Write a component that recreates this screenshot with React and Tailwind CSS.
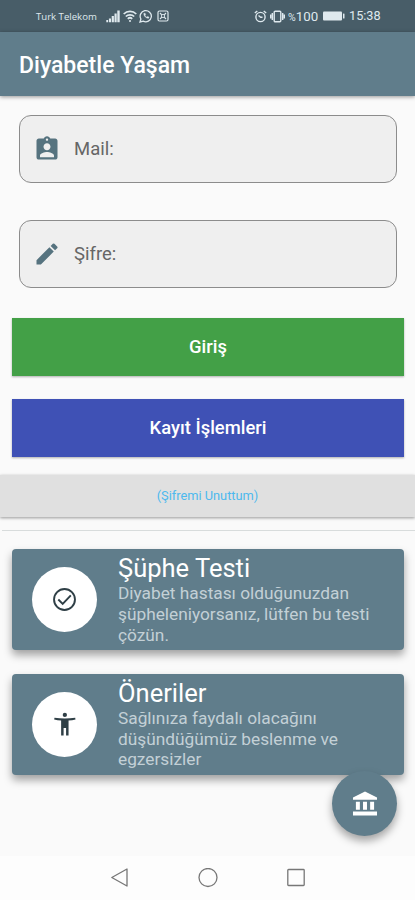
import React from 'react';
import { MdAssignmentInd, MdCreate } from 'react-icons/md';

const fields = [
  { id: 'mail', label: 'Mail:', icon: MdAssignmentInd },
  { id: 'sifre', label: 'Şifre:', icon: MdCreate },
];

const cards = [
  {
    title: 'Şüphe Testi',
    lines: ['Diyabet hastası olduğunuzdan', 'şüpheleniyorsanız, lütfen bu testi', 'çözün.'],
    icon: CheckIcon,
  },
  {
    title: 'Öneriler',
    lines: ['Sağlınıza faydalı olacağını', 'düşündüğümüz beslenme ve', 'egzersizler'],
    icon: PersonIcon,
  },
];

function CheckIcon({ className }) {
  return (
    <svg className={className} viewBox="0 0 24 24" fill="none" stroke="currentColor" strokeWidth="1.7">
      <circle cx="12" cy="12" r="9.300" />
      <path d="M6.500 12l3.900 3.900 7.200-7.600" />
    </svg>
  );
}

function PersonIcon({ className }) {
  return (
    <svg className={className} viewBox="0 0 24 24" fill="currentColor">
      <circle cx="12.300" cy="3.500" r="1.900" />
      <path d="M3.100 6c3 .5 6 .6 9.200.6s6.200-.1 9.200-.6l.3 1.500c-2.100.6-4 .8-6.200 1v13.200h-2.200v-6.500h-2.200v6.500H9V8.500c-2.200-.2-4.100-.4-6.200-1z" />
    </svg>
  );
}

function BankIcon({ className }) {
  return (
    <svg className={className} viewBox="0 0 24 24" fill="currentColor">
      <path d="M12 1.200L22.300 6.400V8.400H1.700V6.400z" />
      <path d="M4.200 10h3.400v7H4.200zM10.300 10h3.400v7h-3.400zM16.400 10h3.400v7h-3.400zM1.700 18.500h20.600v3.400H1.700z" />
    </svg>
  );
}

function StatusBar() {
  return (
    <div className="flex h-8 items-center bg-[#485d68] pl-[36px] pr-[33px] text-[#dfe9ee]">
      <span className="w-[70px] whitespace-nowrap pt-px font-['Open_Sans'] text-[9.6px] leading-none">Turk Telekom</span>
      {/* signal */}
      <svg className="h-[14px] w-[14px]" viewBox="0 0 14 14" fill="currentColor">
        <path d="M0.300 11h1.800v2.200H0.300zM2.900 9.500h2.100v3.700H2.900zM5.700 7h2.200v6.200H5.700zM8.500 4.500h2.200v8.700H8.500zM11.300 1.500h2.400v11.700h-2.400z" />
      </svg>
      {/* wifi */}
      <svg className="ml-[3px] h-[14px] w-[14px]" viewBox="0 0 14 14" fill="none" stroke="currentColor" strokeWidth="1.700">
        <path d="M0.700 5a9 9 0 0 1 12.600 0M2.800 7.500a6 6 0 0 1 8.400 0M4.800 9.800a3.200 3.200 0 0 1 4.400 0" />
        <circle cx="7" cy="12" r="1" fill="currentColor" stroke="none" />
      </svg>
      {/* whatsapp */}
      <svg className="ml-[2px] h-[14px] w-[14px]" viewBox="0 0 14 14" fill="none" stroke="currentColor" strokeWidth="1.300">
        <path d="M1 13l.9-3A5.600 5.600 0 1 1 4.200 12.200z" />
        <path d="M4.800 4.300c-.4 2.600 2.200 5.200 4.900 5l.3-1.200-1.500-.7-.8.7c-.8-.4-1.300-1-1.600-1.700l.6-.8-.6-1.400z" fill="currentColor" strokeWidth="0.300" />
      </svg>
      {/* boxed notification */}
      <svg className="ml-[4px] h-[12px] w-[12px]" viewBox="0 0 12 12" fill="none" stroke="currentColor" strokeWidth="1.200">
        <rect x="1" y="1" width="10" height="10" rx="1.500" />
        <path d="M3 3l1.800 1.800M9 3L7.200 4.800M3 9l1.800-1.800M9 9L7.200 7.200" />
        <circle cx="6" cy="6" r="1.600" strokeWidth="0.900" />
      </svg>

      <div className="ml-auto flex items-center">
        {/* alarm */}
        <svg className="h-[13px] w-[13px]" viewBox="0 0 13 13" fill="none" stroke="currentColor" strokeWidth="1.400">
          <circle cx="6.500" cy="7" r="4.600" />
          <path d="M0.800 3L3.300 1M12.200 3L9.700 1M4.500 5.500l2.200 1.800h1.800" />
        </svg>
        {/* vibrate */}
        <svg className="ml-[3px] h-[13px] w-[15px]" viewBox="0 0 15 13" fill="none" stroke="currentColor" strokeWidth="1.400">
          <rect x="4.200" y="1.200" width="6.600" height="10.600" rx="1" />
          <path d="M2.300 3v7M0.700 4.500v4M12.700 3v7M14.300 4.500v4" />
        </svg>
        <span className="ml-[3px] w-[35px] whitespace-nowrap pt-px font-[Roboto] text-[13.300px] leading-none">
          <span className="text-[10.500px]">%</span>100
        </span>
        {/* battery */}
        <svg className="h-[10px] w-[22px]" viewBox="0 0 22 10" fill="currentColor">
          <rect x="0" y="0.500" width="19" height="9" rx="1" />
          <rect x="20" y="2.500" width="1.500" height="5" rx="0.500" />
        </svg>
        <span className="ml-[4px] w-[33px] whitespace-nowrap pt-px font-[Roboto] text-[12.700px] leading-none">15:38</span>
      </div>
    </div>
  );
}

function Field({ id, label, icon: Icon }) {
  return (
    <label
      htmlFor={id}
      className="flex h-[68px] items-center rounded-[12px] border border-[#8c8c8c] bg-[#efefef] pl-[13px]"
    >
      <Icon className="h-[28px] w-[28px] text-[#56737f]" />
      <span className="ml-[13px] pt-[2px] text-[18.500px] text-[#666666]">{label}</span>
      <input id={id} className="min-w-0 flex-1 outline-none" />
    </label>
  );
}

function InfoCard({ title, lines, icon: Icon }) {
  return (
    <div className="flex h-[101px] items-center rounded-[4px] bg-[#607d8b] pl-5 shadow-[0_5px_8px_rgba(0,0,0,0.36)]">
      <div className="flex h-[65px] w-[65px] shrink-0 items-center justify-center rounded-full bg-white">
        <Icon className="h-[27px] w-[27px] text-[#2f3f46]" />
      </div>
      <div className="ml-[21px] whitespace-nowrap">
        <h2 className="text-[25.500px] leading-[30px] text-white">{title}</h2>
        {lines.map((line) => (
          <p key={line} className="text-[17.300px] leading-[20.700px] text-[#c3d0d6]">
            {line}
          </p>
        ))}
      </div>
    </div>
  );
}

function NavBar() {
  return (
    <div className="flex h-[44px] items-center justify-center gap-[68px] bg-[#fdfdfd] text-[#777777]">
      <svg className="h-5 w-5" viewBox="0 0 20 20" fill="none" stroke="currentColor" strokeWidth="1.300">
        <path d="M17 1v17L1.800 9.500z" strokeLinejoin="round" />
      </svg>
      <svg className="h-5 w-5" viewBox="0 0 20 20" fill="none" stroke="currentColor" strokeWidth="1.300">
        <circle cx="10" cy="9.500" r="9" />
      </svg>
      <svg className="h-5 w-5" viewBox="0 0 20 20" fill="none" stroke="currentColor" strokeWidth="1.300">
        <rect x="1.800" y="1.500" width="16.400" height="16" rx="0.800" />
      </svg>
    </div>
  );
}

function App() {
  return (
    <div className="relative flex h-[900px] w-[415px] flex-col overflow-hidden bg-[#fafafa] font-[Roboto,sans-serif]">
      <StatusBar />
      <header className="flex h-16 shrink-0 items-center bg-[#607d8b] pl-[19px] pt-[5px] shadow-[0_1px_4px_rgba(0,0,0,0.4)]">
        <h1 className="text-[23px] font-medium text-white">Diyabetle Yaşam</h1>
      </header>

      <form className="flex flex-col gap-[37px] pl-[19px] pr-[18px] pt-[19px]">
        {fields.map((field) => (
          <Field key={field.id} {...field} />
        ))}
      </form>

      <div className="mt-[30px] flex flex-col gap-[23px] pl-3 pr-[11px]">
        <button className="h-[58px] bg-[#43a047] text-[18.400px] font-medium text-white shadow-[0_1px_2px_rgba(0,0,0,0.3)]">
          Giriş
        </button>
        <button className="h-[58px] bg-[#3f51b5] text-[18.400px] font-medium text-white shadow-[0_1px_2px_rgba(0,0,0,0.3)]">
          Kayıt İşlemleri
        </button>
      </div>

      <button className="mt-[18px] h-[42px] shrink-0 bg-[#e0e0e0] text-[12.800px] text-[#4db9ee] shadow-[0_1px_3px_rgba(0,0,0,0.4)]">
        (Şifremi Unuttum)
      </button>
      <div className="ml-[2px] mt-[13px] h-px shrink-0 bg-[#d8dcdc]" />

      <div className="mt-[18px] flex flex-1 flex-col gap-[23.500px] pl-3 pr-[11px]">
        {cards.map((card) => (
          <InfoCard key={card.title} {...card} />
        ))}
      </div>

      {/* floating button overlaps the last card */}
      <button className="absolute bottom-[64px] right-[18px] flex h-[65px] w-[65px] items-center justify-center rounded-full bg-[#607d8b] text-white shadow-[0_5px_8px_rgba(0,0,0,0.35)]">
        <BankIcon className="h-[28px] w-[28px]" />
      </button>

      <NavBar />
    </div>
  );
}

export default App;
